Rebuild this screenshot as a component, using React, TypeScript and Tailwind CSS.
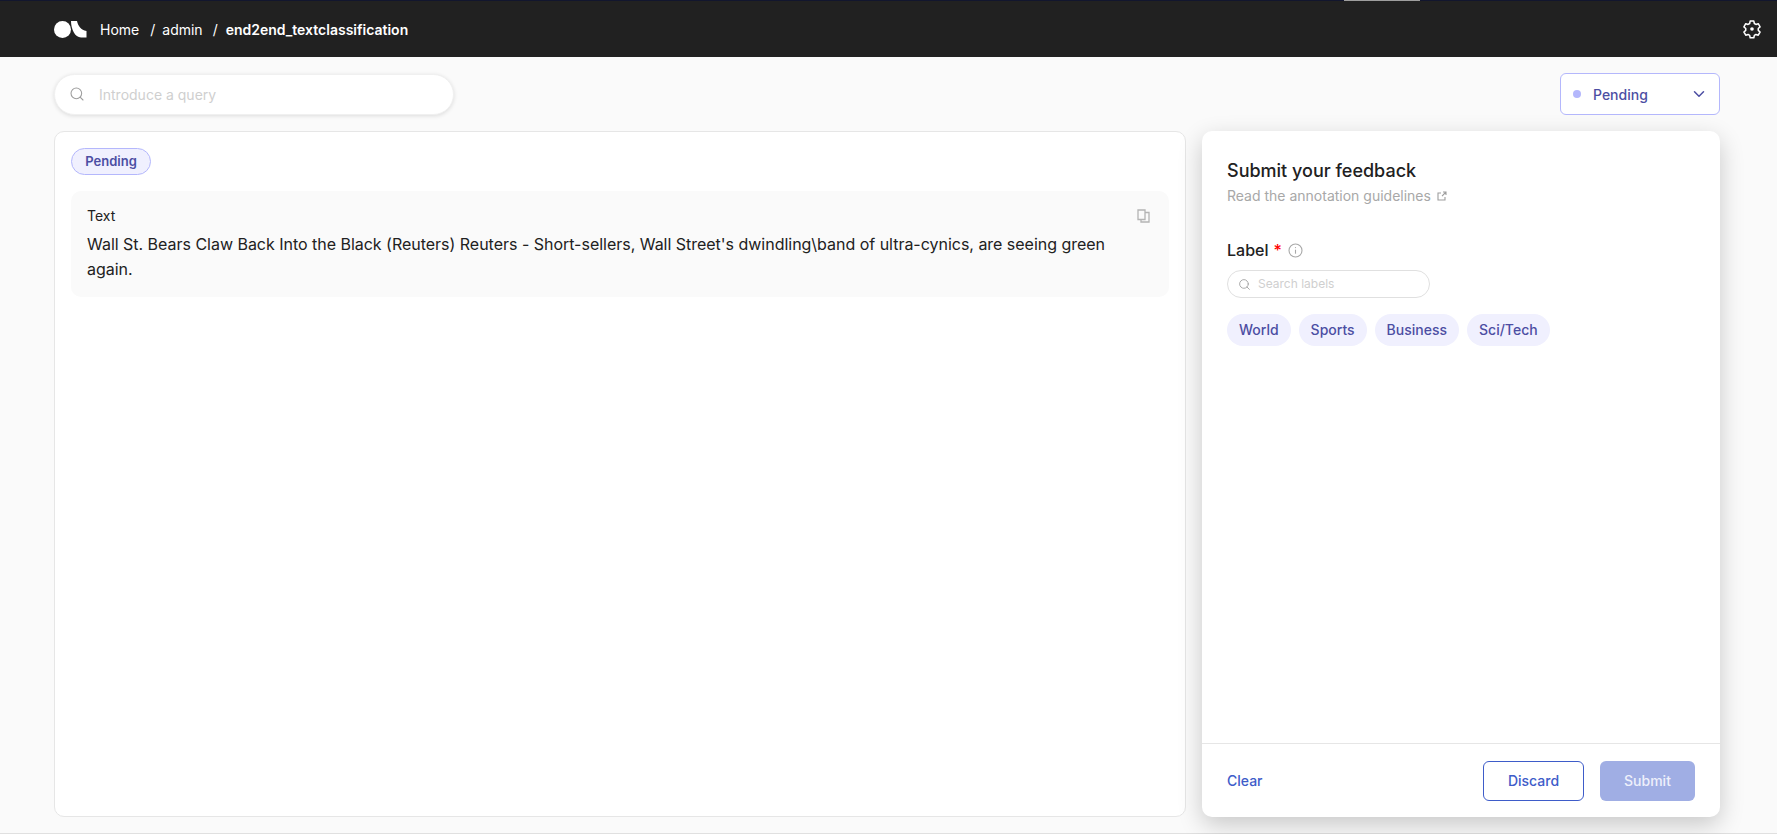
import { ChevronDown, Search } from "lucide-react";

const labels = ["World", "Sports", "Business", "Sci/Tech"];

const Logo = () => (
  <svg width="33" height="17" viewBox="0 0 33 17" fill="#ffffff">
    <circle cx="8.5" cy="8.5" r="8.5" />
    <path d="M17 0h6c1 5 4 9 9.5 10v6.5H27C21 16.5 17 8 17 0z" />
  </svg>
);

const GearIcon = () => (
  <svg width="20" height="20" viewBox="0 0 24 24" fill="none" stroke="#ffffff" strokeWidth="1.8" strokeLinejoin="round">
    <path d="M9.8 2.5h4.4l.6 2.9 1.9 1.1 2.8-.9 2.2 3.8-2.2 2v2.2l2.2 2-2.2 3.8-2.8-.9-1.9 1.1-.6 2.9H9.8l-.6-2.9-1.9-1.1-2.8.9-2.2-3.8 2.2-2v-2.2l-2.2-2 2.2-3.8 2.8.9 1.9-1.1z" />
    <circle cx="12" cy="12" r="2.2" fill="#ffffff" stroke="none" />
  </svg>
);

const CopyIcon = () => (
  <svg width="13" height="14" viewBox="0 0 13 14" fill="none" stroke="#b4b4b4" strokeWidth="1.3">
    <path d="M1 1h7v9.5H1z" />
    <path d="M8 3.5h4V13H4v-2.5" />
  </svg>
);

const ExternalIcon = () => (
  <svg width="10" height="10" viewBox="0 0 10 10" fill="none" stroke="#9e9e9e" strokeWidth="1.1">
    <path d="M4 2H1v7h7V6" />
    <path d="M5 5.2 9 1M6 1h3v3" />
  </svg>
);

const InfoIcon = () => (
  <svg width="15" height="15" viewBox="0 0 15 15" fill="none" stroke="#a8a8a8" strokeWidth="1.1">
    <circle cx="7.5" cy="7.5" r="6.5" />
    <path d="M7.5 6.7v4" />
    <circle cx="7.5" cy="4.6" r="0.6" fill="#a8a8a8" stroke="none" />
  </svg>
);

export default function App() {
  return (
    <div className="flex h-screen flex-col overflow-hidden bg-white font-['Inter',sans-serif] text-[#212121]">
      {/* Top bar */}
      <header className="relative flex h-[57px] flex-none items-center justify-between border-t border-[#12162e] bg-[#212121] pr-[15px] pl-[54px] text-sm text-white">
        <span className="absolute -top-px left-[1344px] h-px w-[76px] bg-[#9e9e9e]" />
        <div className="flex items-center">
          <Logo />
          <div className="flex pt-[2px]">
            <span className="ml-[13px]">Home</span>
            <span className="ml-[11px]">/</span>
            <span className="ml-[7px]">admin</span>
            <span className="ml-[10px]">/</span>
            <span className="ml-[8px] font-semibold">end2end_textclassification</span>
          </div>
        </div>
        <GearIcon />
      </header>

      <main className="flex min-h-0 flex-1 flex-col border-b border-[#e0e0e0] bg-[#fafafa] pt-4 pr-[57px] pb-4 pl-[54px]">
        {/* Search + status filter */}
        <div className="flex h-[42px] flex-none items-center justify-between">
          <div className="flex h-[41px] w-[400px] items-center rounded-full border border-[#f0f0f0] bg-white pl-[14px] shadow-[0_1px_4px_rgba(0,0,0,0.12)]">
            <Search size={16} strokeWidth={1.6} className="text-[#9e9e9e]" />
            <span className="ml-[14px] pt-[2px] text-sm text-[#cfcfcf]">Introduce a query</span>
          </div>
          <div className="flex h-[42px] w-[160px] items-center rounded-md border border-[#b4b7fc] bg-white pr-[11px] pl-3 text-sm font-medium text-[#4c4ea3]">
            <span className="h-2 w-2 rounded-full bg-[#b4b7fc]" />
            <span className="ml-[12px] flex-1 pt-[2px]">Pending</span>
            <ChevronDown size={18} strokeWidth={2} />
          </div>
        </div>

        <div className="mt-4 flex min-h-0 flex-1 gap-4">
          {/* Record */}
          <section className="flex-1 rounded-[10px] border border-[#e6e6e6] bg-white p-4">
            <span className="flex h-[27px] w-[80px] items-center justify-center rounded-full border border-[#b4b7fc] bg-[#f0f0fe] pt-px text-[13px] font-semibold text-[#4c4ea3]">
              Pending
            </span>
            <div className="relative mt-4 h-[106px] rounded-[10px] bg-[#fafafa] px-4 pt-[14px]">
              <div className="text-sm leading-[22px]">Text</div>
              <p className="mt-[5px] pr-[40px] text-base leading-[25px] tracking-[-0.02px]">
                Wall St. Bears Claw Back Into the Black (Reuters) Reuters - Short-sellers, Wall Street's dwindling\band of ultra-cynics, are seeing green again.
              </p>
              <span className="absolute top-[18px] right-[19px]">
                <CopyIcon />
              </span>
            </div>
          </section>

          {/* Feedback form */}
          <aside className="flex w-[518px] flex-none flex-col rounded-[10px] bg-white shadow-[0_8px_24px_rgba(0,0,0,0.2)]">
            <div className="flex-1 px-[25px] pt-[29px]">
              <h2 className="text-lg leading-[22px] font-medium">Submit your feedback</h2>
              <div className="mt-[3px] flex items-center gap-[6px] text-sm leading-[22px] text-[#a8a8a8]">
                Read the annotation guidelines
                <ExternalIcon />
              </div>
              <div className="mt-[32px] flex items-center text-base leading-[22px] font-medium">
                Label
                <span className="ml-[5px] text-[#ff0000]">*</span>
                <span className="ml-[6px]">
                  <InfoIcon />
                </span>
              </div>
              <div className="mt-[9px] flex h-[28px] w-[203px] items-center rounded-full border border-[#e0e0e0] pl-[10px]">
                <Search size={13} strokeWidth={1.6} className="text-[#9e9e9e]" />
                <span className="ml-[7px] text-xs text-[#cfcfcf]">Search labels</span>
              </div>
              <div className="mt-4 flex gap-2">
                {labels.map((label) => (
                  <span
                    key={label}
                    className="flex h-8 items-center rounded-full bg-[#f0f0fe] px-3 text-sm font-medium text-[#4c4ea3]"
                  >
                    {label}
                  </span>
                ))}
              </div>
            </div>
            <div className="flex h-[74px] flex-none items-center border-t border-[#e6e6e6] pr-[25px] pl-[25px] text-sm font-medium">
              <span className="flex-1 text-[#3e5cc9]">Clear</span>
              <span className="flex h-10 w-[101px] items-center justify-center rounded-md border border-[#3e5cc9] text-[#3e5cc9]">
                Discard
              </span>
              <span className="ml-4 flex h-10 w-[95px] items-center justify-center rounded-md bg-[#a0aee4] text-[#eef0fb]">
                Submit
              </span>
            </div>
          </aside>
        </div>
      </main>
      <div className="h-[2px] flex-none bg-white" />
    </div>
  );
}
